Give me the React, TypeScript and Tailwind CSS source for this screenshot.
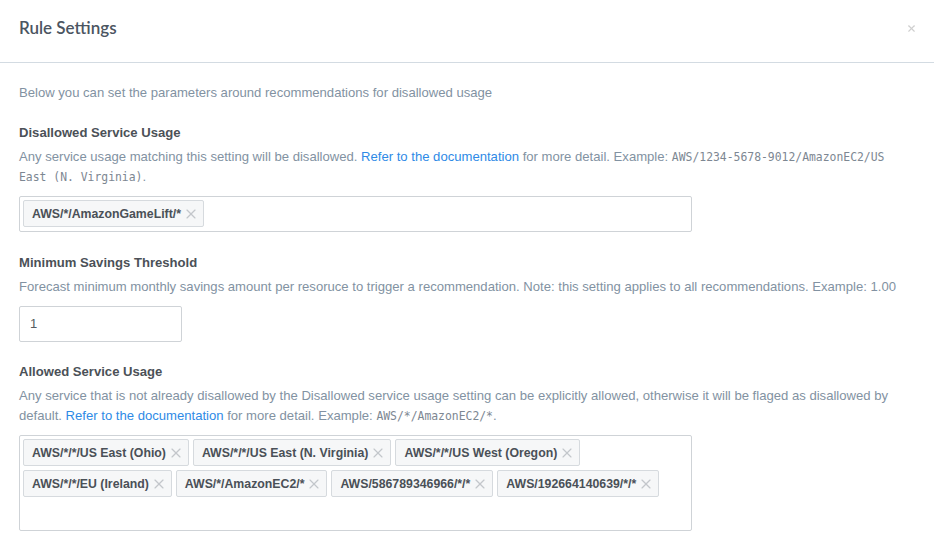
import { X } from "lucide-react";

const allowed = [
  "AWS/*/*/US East (Ohio)",
  "AWS/*/*/US East (N. Virginia)",
  "AWS/*/*/US West (Oregon)",
  "AWS/*/*/EU (Ireland)",
  "AWS/*/AmazonEC2/*",
  "AWS/586789346966/*/*",
  "AWS/192664140639/*/*",
];

function Tag({ label }: { label: string }) {
  return (
    <span className="flex h-[27px] items-center gap-[2px] rounded-[2px] border border-[#d6dade] bg-[#f6f7f8] pl-[8px] pr-[4px] text-[12.3px] font-bold text-[#4a5057]">
      {label}
      <X className="h-4 w-4 text-[#c3c7cb]" strokeWidth={1.75} />
    </span>
  );
}

function Mono({ children }: { children: React.ReactNode }) {
  return <code className="font-['DejaVu_Sans_Mono',monospace] text-[11.4px] leading-none text-[#7d8792]">{children}</code>;
}

function Doc() {
  return <a className="text-[#2e8ae6]">Refer to the documentation</a>;
}

export default function App() {
  return (
    <div className="h-[544px] w-[934px] overflow-hidden bg-white font-['Liberation_Sans',Arial,sans-serif]">
      <div className="flex h-[63px] items-start justify-between border-b border-[#d3dbe2] px-[19px] pt-[15px]">
        <h1 className="font-['Lato',sans-serif] text-[17px] font-semibold leading-[26px] text-[#4b5561]">Rule Settings</h1>
        <X className="mr-[-2px] mt-[8px] h-[11px] w-[11px] text-[#cfcfcf]" strokeWidth={2.5} />
      </div>

      <div className="pl-[19px] pr-[19px] pt-[20px] text-[13.1px] leading-[20px] text-[#8292a2]">
        <p className="mb-[20px]">Below you can set the parameters around recommendations for disallowed usage</p>

        <section className="mb-[21px]">
          <h2 className="mb-[4px] font-bold text-[#4b5157]">Disallowed Service Usage</h2>
          <p>
            Any service usage matching this setting will be disallowed. <Doc /> for more detail. Example:{" "}
            <Mono>AWS/1234-5678-9012/AmazonEC2/US East (N. Virginia)</Mono>.
          </p>
          <div className="mt-[9px] flex h-[36px] w-[673px] flex-wrap gap-[4px] rounded-[2px] border border-[#cfd3d7] p-[3px]">
            <Tag label="AWS/*/AmazonGameLift/*" />
          </div>
        </section>

        <section className="mb-[20px]">
          <h2 className="mb-[4px] font-bold text-[#4b5157]">Minimum Savings Threshold</h2>
          <p>
            Forecast minimum monthly savings amount per resoruce to trigger a recommendation. Note: this setting applies to all
            recommendations. Example: 1.00
          </p>
          <div className="mt-[9px] flex h-[36px] w-[163px] items-center rounded-[2px] border border-[#cfd3d7] px-[10px] text-[13px] text-[#555b61]">
            1
          </div>
        </section>

        <section>
          <h2 className="mb-[4px] font-bold text-[#4b5157]">Allowed Service Usage</h2>
          <p>
            Any service that is not already disallowed by the Disallowed service usage setting can be explicitly allowed, otherwise
            it will be flaged as disallowed by default. <Doc /> for more detail. Example: <Mono>AWS/*/AmazonEC2/*</Mono>.
          </p>
          <div className="mt-[9px] flex h-[96px] w-[673px] flex-wrap content-start gap-[4px] rounded-[2px] border border-[#cfd3d7] p-[3px]">
            {allowed.map((a) => (
              <Tag key={a} label={a} />
            ))}
          </div>
        </section>
      </div>
    </div>
  );
}
